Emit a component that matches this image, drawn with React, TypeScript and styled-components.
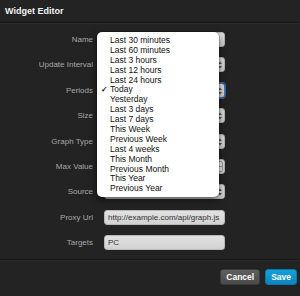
import React from 'react';
import styled, { createGlobalStyle } from 'styled-components';

const GlobalStyle = createGlobalStyle`
  html, body {
    margin: 0;
    padding: 0;
    background: #232323;
  }
  body {
    font-family: "Liberation Sans", Arial, sans-serif;
  }
`;

const Dialog = styled.div`
  position: relative;
  width: 300px;
  height: 296px;
  background: #232323;
  display: flex;
  flex-direction: column;
  overflow: hidden;
`;

const Header = styled.div`
  height: 22px;
  display: flex;
  align-items: center;
  padding: 0 5px;
  border-bottom: 1px solid #161616;
  box-shadow: 0 1px 0 #2c2c2c;
`;

const Title = styled.h1`
  margin: 0;
  font-size: 9px;
  font-weight: bold;
  color: #f2f2f2;
`;

const Form = styled.div`
  display: grid;
  grid-template-columns: 93px 121px;
  column-gap: 11px;
  row-gap: 10.4px;
  grid-auto-rows: 15px;
  padding-top: 9px;
  height: 236px;
  box-sizing: border-box;
`;

const Label = styled.label`
  font-size: 8px;
  color: #a8a8a8;
  text-align: right;
  line-height: 15px;
`;

const Field = styled.div<{ $focus?: boolean }>`
  position: relative;
  height: 15px;
  box-sizing: border-box;
  border-radius: 3px;
  background: linear-gradient(#e2e2e2, #d2d2d2);
  border: 1px solid ${p => (p.$focus ? '#3d7cc9' : '#b8b8b8')};
  box-shadow: ${p => (p.$focus ? '0 0 0 1px rgba(80,140,220,0.6)' : 'none')};
  font-size: 8px;
  color: #333;
  line-height: 13px;
  padding: 0 3px;
  white-space: nowrap;
  overflow: hidden;
`;

const Arrows = styled.svg`
  position: absolute;
  right: 2px;
  top: 3px;
`;

const Spinner = styled.div`
  position: absolute;
  right: 1px;
  top: 1px;
  width: 6px;
  height: 11px;
  border: 1px solid #9a9a9a;
  border-radius: 2px;
  box-sizing: border-box;
  background: #eee;
  display: flex;
  flex-direction: column;
  &::after {
    content: '';
    height: 1px;
    margin-top: 4px;
    background: #9a9a9a;
  }
`;

const Footer = styled.div`
  flex: 1;
  border-top: 1px solid #161616;
  box-shadow: inset 0 1px 0 #2c2c2c;
  display: flex;
  justify-content: flex-end;
  align-items: flex-start;
  gap: 5px;
  padding: 9px 3px 0 0;
`;

const Button = styled.button<{ $primary?: boolean }>`
  height: 16px;
  padding: 0 5px;
  border-radius: 3px;
  font-family: "Liberation Sans", Arial, sans-serif;
  font-size: 8.5px;
  font-weight: bold;
  color: #fff;
  border: 1px solid ${p => (p.$primary ? '#0877ab' : '#3a3a3a')};
  background: ${p =>
    p.$primary ? 'linear-gradient(#15a0d8, #0a86bf)' : 'linear-gradient(#5f5f5f, #4a4a4a)'};
  cursor: pointer;
`;

const Menu = styled.ul`
  position: absolute;
  left: 97px;
  top: 32px;
  width: 122px;
  margin: 0;
  padding: 4px 0 3px;
  list-style: none;
  background: #fff;
  border-radius: 5px;
  box-shadow: 0 3px 8px rgba(0, 0, 0, 0.55), 0 0 0 1px rgba(0, 0, 0, 0.15);
`;

const Item = styled.li`
  position: relative;
  height: 9.9px;
  line-height: 9.9px;
  padding-left: 13px;
  font-size: 8.5px;
  color: #111;
`;

const Check = styled.span`
  position: absolute;
  left: 4px;
  font-size: 8px;
  font-weight: bold;
`;

const SelectArrows = () => (
  <Arrows width="4" height="8" viewBox="0 0 4 8">
    <path d="M0 3 L2 0.5 L4 3 Z M0 5 L2 7.5 L4 5 Z" fill="#555" />
  </Arrows>
);

const periods = [
  'Last 30 minutes',
  'Last 60 minutes',
  'Last 3 hours',
  'Last 12 hours',
  'Last 24 hours',
  'Today',
  'Yesterday',
  'Last 3 days',
  'Last 7 days',
  'This Week',
  'Previous Week',
  'Last 4 weeks',
  'This Month',
  'Previous Month',
  'This Year',
  'Previous Year',
];

const App: React.FC = () => {
  const selected = 'Today';
  return (
    <>
      <GlobalStyle />
      <Dialog>
        <Header>
          <Title>Widget Editor</Title>
        </Header>
        <Form>
          <Label>Name</Label>
          <Field />
          <Label>Update Interval</Label>
          <Field><SelectArrows /></Field>
          <Label>Periods</Label>
          <Field $focus><SelectArrows /></Field>
          <Label>Size</Label>
          <Field><SelectArrows /></Field>
          <Label>Graph Type</Label>
          <Field><SelectArrows /></Field>
          <Label>Max Value</Label>
          <Field><Spinner /></Field>
          <Label>Source</Label>
          <Field><SelectArrows /></Field>
          <Label>Proxy Url</Label>
          <Field>http://example.com/api/graph.js</Field>
          <Label>Targets</Label>
          <Field>PC</Field>
        </Form>
        <Footer>
          <Button>Cancel</Button>
          <Button $primary>Save</Button>
        </Footer>
        <Menu>
          {periods.map(p => (
            <Item key={p}>
              {p === selected && <Check>✓</Check>}
              {p}
            </Item>
          ))}
        </Menu>
      </Dialog>
    </>
  );
};

export default App;
